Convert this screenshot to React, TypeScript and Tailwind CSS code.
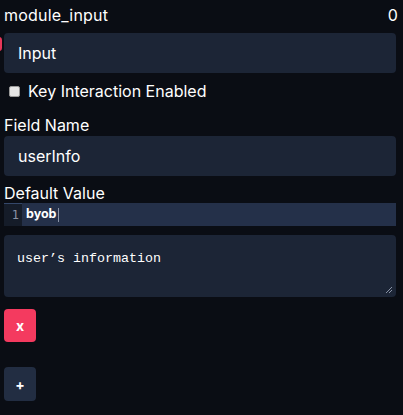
import React from "react";

export default function App() {
  return (
    <div className="relative min-h-[415px] w-[403px] bg-[#0a0d14] text-white" style={{ fontFamily: "Inter, 'Noto Sans', sans-serif" }}>
      <div className="absolute left-[-4px] top-[37px] h-[14px] w-[6px] rounded-full bg-[#e8375a]" />
      <div className="flex flex-col px-[4px] pr-[7px] pt-[4px]">
        <div className="flex items-center justify-between text-[16px] leading-[22px] tracking-[0.2px]">
          <span>module_input</span>
          <span className="-mr-[2px]">0</span>
        </div>
        <div className="mt-[7px] flex h-[40px] items-center rounded-[4px] bg-[#1c2536] px-[14px] text-[16px]">Input</div>
        <label className="mt-[7px] flex items-center gap-[8px] pl-[5px] text-[16px] leading-[22px]">
          <span className="inline-block h-[11px] w-[11px] rounded-[2px] border border-[#9a9a9a] bg-[#e6e6e6]" />
          <span>Key Interaction Enabled</span>
        </label>
        <div className="mt-[13px] text-[16px] leading-[20px]">Field Name</div>
        <div className="mt-[1px] flex h-[40px] items-center rounded-[4px] bg-[#1c2536] px-[14px] text-[16px]">userInfo</div>
        <div className="mt-[6px] text-[16px] leading-[22px]">Default Value</div>
        <div className="-mt-[1px] flex h-[23px] items-stretch bg-[#243049]">
          <div className="flex w-[18px] items-center justify-end border-t border-[#34476a] bg-[#151c29] pr-[3px] text-[12px] text-[#8a93a6]" style={{ fontFamily: "'DejaVu Sans Mono', monospace" }}>1</div>
          <div className="flex items-center pl-[4px] text-[12.5px] font-bold" style={{ fontFamily: "Inter, sans-serif" }}>
            byob<span className="ml-[1px] inline-block h-[14px] w-[1px] bg-[#8a93a6]" />
          </div>
        </div>
        <div className="relative mt-[9px] h-[62px] rounded-[4px] bg-[#1c2536] px-[13px] pt-[16px] text-[13.33px] leading-[16px]" style={{ fontFamily: "'Liberation Mono', monospace" }}>
          user’s information
          <svg className="absolute bottom-[3px] right-[3px]" width="8" height="8" viewBox="0 0 8 8">
            <line x1="1" y1="7" x2="7" y2="1" stroke="#8a93a6" strokeWidth="1" />
            <line x1="4" y1="7" x2="7" y2="4" stroke="#8a93a6" strokeWidth="1" />
          </svg>
        </div>
        <button className="mt-[12px] flex h-[33px] w-[32px] items-center justify-center rounded-[4px] bg-[#f43a5f] text-[14px] font-bold">x</button>
        <button className="mt-[25px] flex h-[34px] w-[32px] items-center justify-center rounded-[4px] bg-[#222d42] text-[14px] font-bold">+</button>
      </div>
    </div>
  );
}
